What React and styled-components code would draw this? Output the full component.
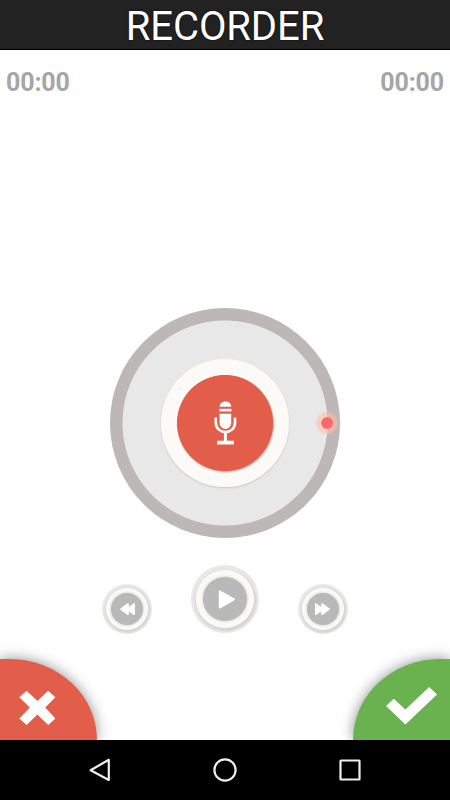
import styled, { createGlobalStyle } from 'styled-components'

const GlobalStyle = createGlobalStyle`
  * {
    box-sizing: border-box;
  }

  body {
    margin: 0;
    background: #fff;
    font-family: Roboto, 'Liberation Sans', sans-serif;
  }

  button {
    border: 0;
    padding: 0;
  }
`

export default function App() {
  return (
    <Screen>
      <GlobalStyle />
      <Header>
        <Title>RECORDER</Title>
      </Header>
      <Times>
        <span>00:00</span>
        <span>00:00</span>
      </Times>
      <Dial>
        <RecordButton aria-label="Record">
          <MicIcon />
        </RecordButton>
        <Knob />
      </Dial>
      <Controls>
        <RoundButton aria-label="Rewind">
          <RewindIcon />
        </RoundButton>
        <RoundButton $large aria-label="Play">
          <PlayIcon />
        </RoundButton>
        <RoundButton aria-label="Forward">
          <RewindIcon $flip />
        </RoundButton>
      </Controls>
      <Actions>
        <CornerButton aria-label="Cancel">
          <svg width="97" height="81" viewBox="0 0 97 81">
            <path
              d="M19.3 38.3 L26.6 31.7 L37.4 42 L48.2 31.7 L55.4 38.3 L45.2 48.6 L55.4 59.4 L48.2 66 L37.4 55.6 L26.6 66 L19.3 59.4 L29.8 48.6 Z"
              fill="#fff"
            />
          </svg>
        </CornerButton>
        <CornerButton $confirm aria-label="Confirm">
          <svg width="97" height="81" viewBox="0 0 97 81">
            <path
              d="M33 47 L40.8 39.8 L52.4 50.6 L76.2 28 L84 35.4 L52.4 65.5 Z"
              fill="#fff"
            />
          </svg>
        </CornerButton>
      </Actions>
      <NavBar>
        <svg width="26" height="26" viewBox="0 0 26 26">
          <path d="M21.8 2.8 V23 L3.6 13.2 Z" />
        </svg>
        <svg width="26" height="26" viewBox="0 0 26 26">
          <circle cx="13" cy="13" r="10.6" />
        </svg>
        <svg width="26" height="26" viewBox="0 0 26 26">
          <rect x="3.5" y="3.5" width="19" height="19" rx="0.5" />
        </svg>
      </NavBar>
    </Screen>
  )
}

function MicIcon() {
  return (
    <svg width="24" height="46" viewBox="0 0 24 46" fill="#fff">
      <path d="M6.6 6.7 C6.6 -0.2 18.2 -0.2 18.2 6.7 Z" />
      <rect x="6.4" y="8.8" width="12" height="2.6" />
      <path d="M6.6 13.7 H18.2 V22.5 C18.2 31 6.6 31 6.6 22.5 Z" />
      <path
        d="M2.8 17.6 V22.4 C2.8 35.2 22 35.2 22 22.4 V17.6"
        fill="none"
        stroke="#fff"
        strokeWidth="2.6"
      />
      <rect x="10.9" y="32" width="3" height="9.5" />
      <rect x="4" y="40.7" width="17" height="3.8" />
    </svg>
  )
}

function PlayIcon() {
  return (
    <svg width="44" height="44" viewBox="0 0 44 44">
      <path
        d="M16.7 14.2 L31 22.4 L16.7 30.6 Z"
        fill="#fff"
        stroke="#fff"
        strokeWidth="1.8"
        strokeLinejoin="round"
      />
    </svg>
  )
}

function RewindIcon({ $flip }) {
  return (
    <Flippable $flip={$flip} width="32" height="32" viewBox="0 0 32 32">
      <path
        d="M17 10.9 V21.3 L9.9 16.1 Z M23.2 10.9 V21.3 L16.1 16.1 Z"
        fill="#fff"
        stroke="#fff"
        strokeWidth="1.6"
        strokeLinejoin="round"
      />
    </Flippable>
  )
}

const Screen = styled.main`
  width: 450px;
  height: 800px;
  display: flex;
  flex-direction: column;
  overflow: hidden;
`

const Header = styled.header`
  height: 50px;
  display: flex;
  justify-content: center;
  background: #222;
  border-bottom: 1px solid #000;
`

const Title = styled.h1`
  margin: 0;
  padding-top: 2px;
  color: #fff;
  font-size: 40px;
  font-weight: 400;
  line-height: 50px;
  letter-spacing: -0.1px;
  text-shadow: 0 0 2px #000;
`

const Times = styled.div`
  height: 66px;
  padding: 0 6px;
  display: flex;
  justify-content: space-between;
  color: #a6a6a6;
  font-size: 25px;
  font-weight: 700;
  line-height: 66px;
  letter-spacing: -0.15px;
`

const Dial = styled.section`
  position: relative;
  width: 230px;
  height: 230px;
  margin: 192px auto 0;
  display: flex;
  align-items: center;
  justify-content: center;
  background: radial-gradient(circle, #e8e8e8 102.1px, #bdb7b7 102.9px);
  border-radius: 50%;
`

const RecordButton = styled.button`
  width: 128px;
  height: 128px;
  display: flex;
  align-items: center;
  justify-content: center;
  background: radial-gradient(circle, #e35d4b 47.6px, transparent 48.4px),
    radial-gradient(circle at 64.8px 65px, #aaa69f 46.5px, #fbfaf6 49.5px);
  border-radius: 50%;
  box-shadow: 0 1px 2px rgba(0, 0, 0, 0.14);
`

/* progress handle, sits on top of the ring */
const Knob = styled.div`
  position: absolute;
  top: 104px;
  right: 2px;
  width: 22px;
  height: 22px;
  background: #ff6969;
  background-clip: padding-box;
  border: 5px solid rgba(255, 190, 160, 0.55);
  border-radius: 50%;
`

const Controls = styled.div`
  height: 68px;
  margin-top: 27px;
  display: flex;
  align-items: center;
  justify-content: center;
  gap: 39px;

  button:not(:nth-child(2)) {
    margin-top: 20px;
  }
`

const RoundButton = styled.button`
  width: ${({ $large }) => ($large ? 68 : 50)}px;
  height: ${({ $large }) => ($large ? 68 : 50)}px;
  display: flex;
  align-items: center;
  justify-content: center;
  background: radial-gradient(
      circle,
      #fbfaf6 ${({ $large }) => ($large ? 28.6 : 20.6)}px,
      transparent ${({ $large }) => ($large ? 29.4 : 21.4)}px
    ),
    radial-gradient(
      circle at 51% 52%,
      #cfcfcf ${({ $large }) => ($large ? 28 : 20)}px,
      #e8e8e8 ${({ $large }) => ($large ? 32 : 24)}px
    );
  border-radius: 50%;

  svg {
    flex: none;
    background: #b9b9b9;
    border-radius: 50%;
    box-shadow: 0 0 3px rgba(0, 0, 0, 0.22);
  }
`

const Flippable = styled.svg`
  transform: ${({ $flip }) => ($flip ? 'scaleX(-1)' : 'none')};
`

const Actions = styled.div`
  margin-top: auto;
  display: flex;
  justify-content: space-between;
`

const CornerButton = styled.button`
  width: 97px;
  height: 81px;
  background: ${({ $confirm }) => ($confirm ? '#6ab150' : '#e35d4b')};
  border-radius: ${({ $confirm }) =>
    $confirm ? '87px 0 0 0 / 81px 0 0 0' : '0 87px 0 0 / 0 81px 0 0'};
  box-shadow: 0 0 14px rgba(0, 0, 0, 0.45);

  svg {
    display: block;
  }
`

const NavBar = styled.nav`
  position: relative;
  height: 60px;
  display: flex;
  align-items: center;
  justify-content: center;
  gap: 99px;
  background: #000;

  svg {
    fill: none;
    stroke: #eee;
    stroke-width: 2.2;
    stroke-linejoin: round;
  }
`
